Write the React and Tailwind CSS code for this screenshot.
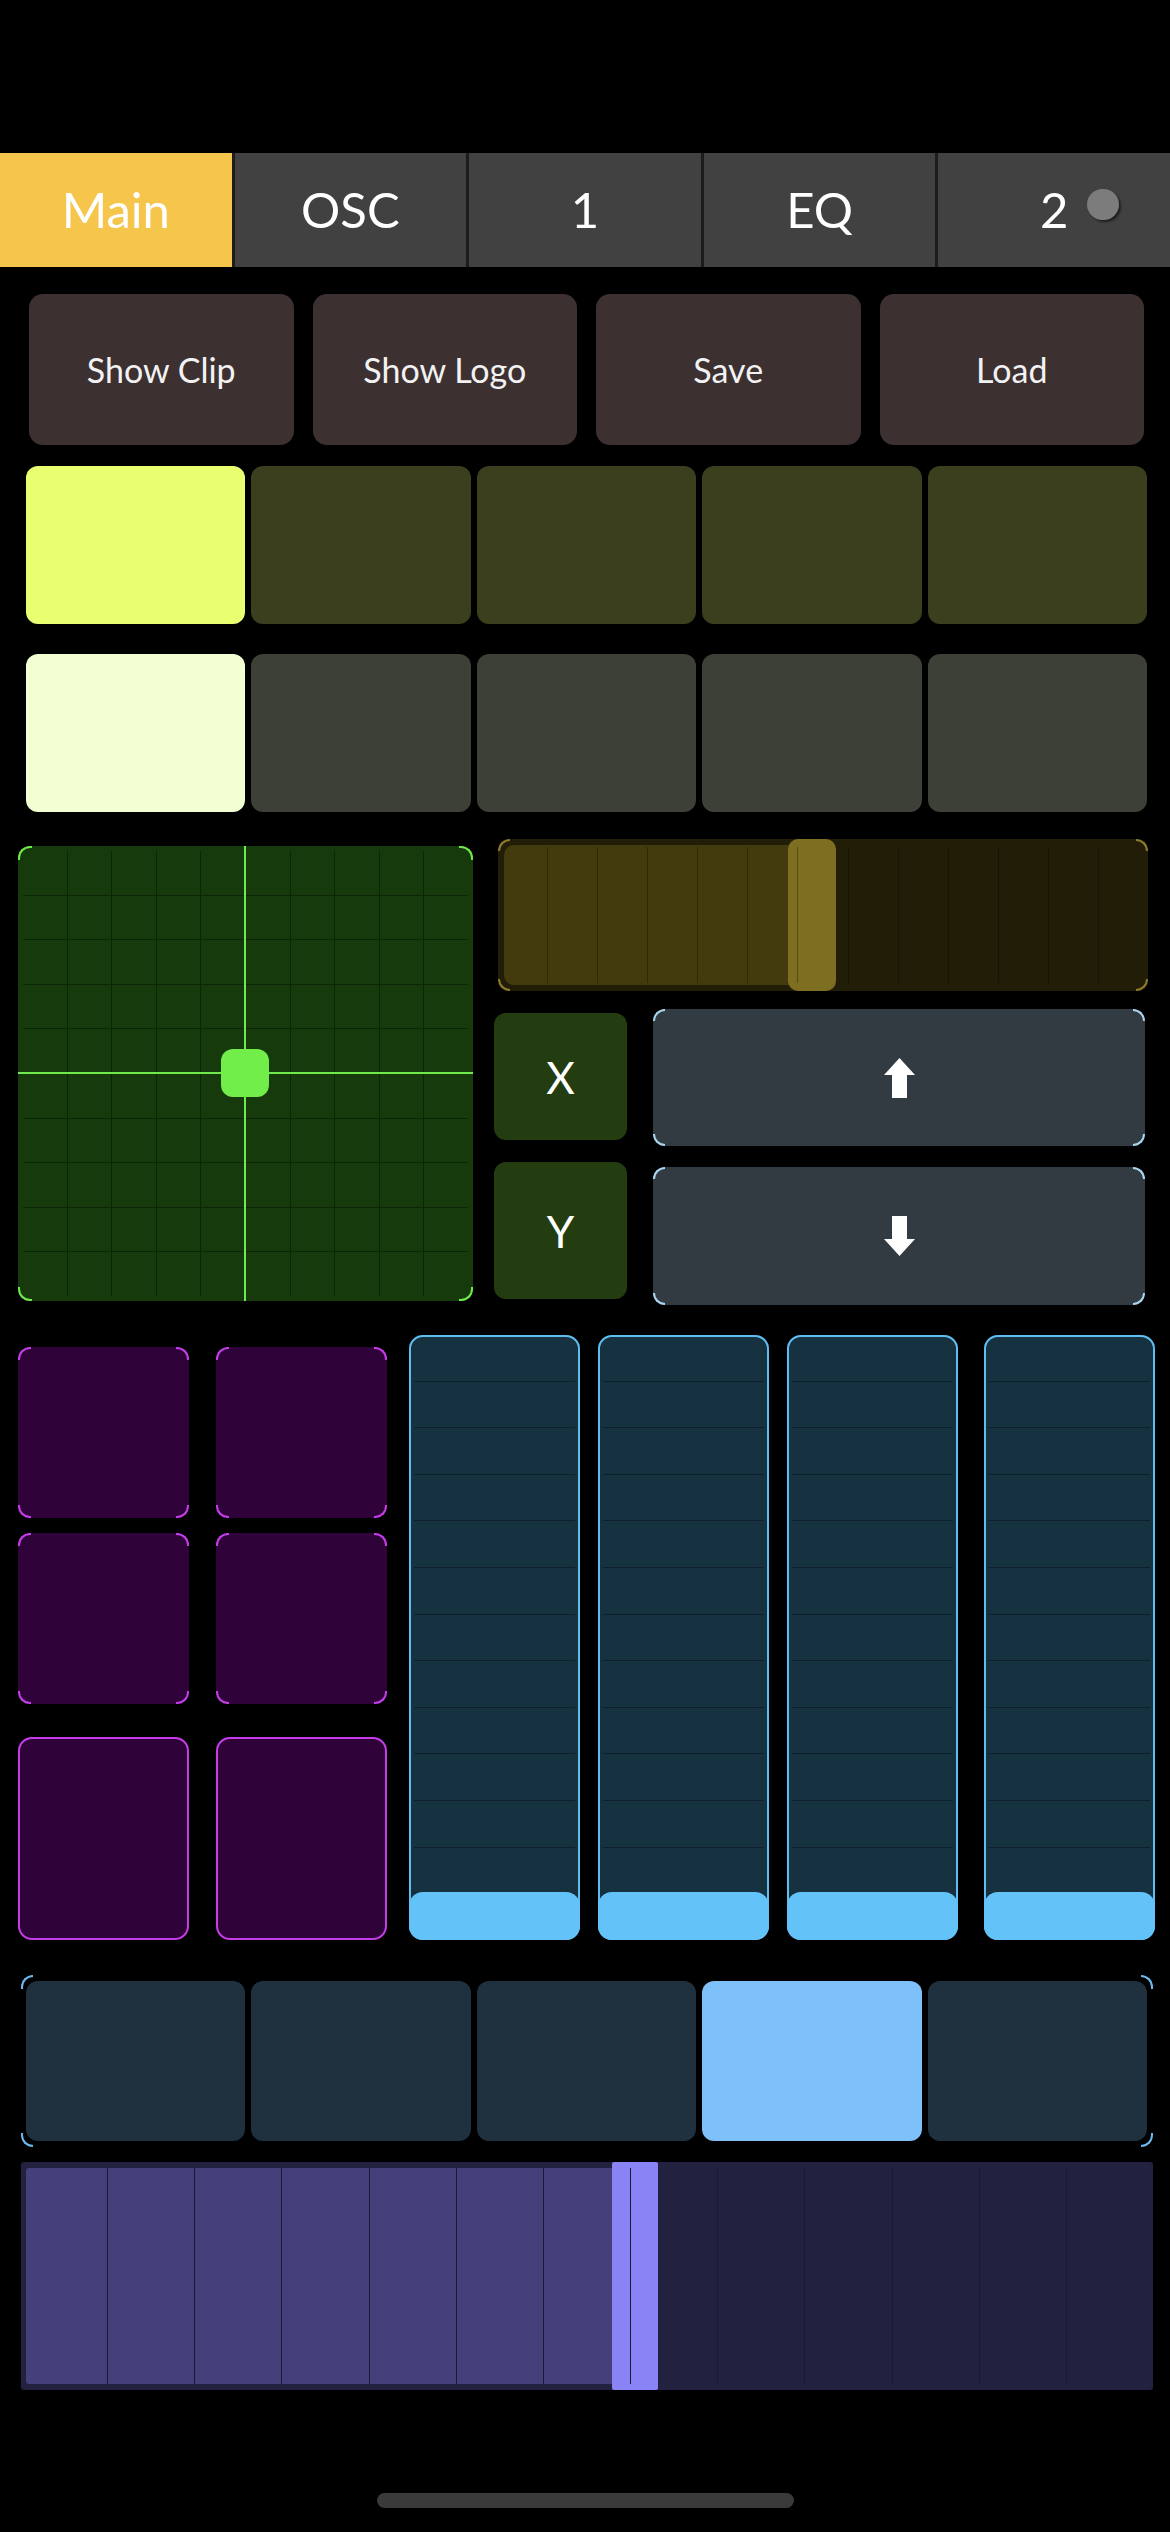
import React from 'react';

const FONT = { fontFamily: 'Lato, "Open Sans", sans-serif' };

const TABS = ['Main', 'OSC', '1', 'EQ', '2'];
const TOP_BUTTONS = ['Show Clip', 'Show Logo', 'Save', 'Load'];

// little arc brackets drawn on the corners of some controls
function Corners({ cls }) {
  return (
    <>
      <span className={`pointer-events-none absolute left-0 top-0 border-t-2 border-l-2 rounded-tl-[12px] ${cls}`} />
      <span className={`pointer-events-none absolute right-0 top-0 border-t-2 border-r-2 rounded-tr-[12px] ${cls}`} />
      <span className={`pointer-events-none absolute left-0 bottom-0 border-b-2 border-l-2 rounded-bl-[12px] ${cls}`} />
      <span className={`pointer-events-none absolute right-0 bottom-0 border-b-2 border-r-2 rounded-br-[12px] ${cls}`} />
    </>
  );
}

function VLines({ count, cls, inset }) {
  return (
    <div className={`pointer-events-none absolute flex ${inset}`}>
      {Array.from({ length: count }).map((_, i) => (
        <div key={i} className={`flex-1 ${i > 0 ? `border-l ${cls}` : ''}`} />
      ))}
    </div>
  );
}

function HLines({ count, cls, inset }) {
  return (
    <div className={`pointer-events-none absolute flex flex-col ${inset}`}>
      {Array.from({ length: count }).map((_, i) => (
        <div key={i} className={`flex-1 ${i > 0 ? `border-t ${cls}` : ''}`} />
      ))}
    </div>
  );
}

function Arrow({ down }) {
  return (
    <svg width="31" height="40" viewBox="0 0 31 40" className={down ? 'rotate-180' : ''}>
      <polygon points="15.5,0 31,17 23,17 23,40 8,40 8,17 0,17" fill="#ffffff" />
    </svg>
  );
}

function XYPad() {
  return (
    <div className="relative mt-[7px] h-[455px] w-[455px] rounded-[12px] bg-[#163a0c]">
      <VLines count={10} cls="border-[#0b2505]" inset="inset-[5px]" />
      <HLines count={10} cls="border-[#0b2505]" inset="inset-[5px]" />
      <div className="absolute inset-y-0 left-[226px] w-[2px] bg-[#6fe94b]" />
      <div className="absolute inset-x-0 top-[226px] h-[2px] bg-[#6fe94b]" />
      <div className="absolute left-[203px] top-[203px] h-[48px] w-[48px] rounded-[12px] bg-[#72ee4b]" />
      <Corners cls="w-[14px] h-[14px] border-[#6fe94b]" />
    </div>
  );
}

function HSlider() {
  return (
    <div className="relative ml-[4px] h-[152px] w-[650px] rounded-[10px] bg-[#211d06]">
      <div className="absolute left-[6px] top-[6px] bottom-[6px] w-[300px] rounded-[10px] bg-[#433b0e]" />
      <div className="absolute top-0 bottom-0 left-[290px] w-[48px] rounded-[10px] bg-[#7d6e22]" />
      <VLines count={13} cls="border-black/30" inset="inset-x-0 inset-y-[8px]" />
      <Corners cls="w-[12px] h-[12px] border-[#8d7a2c]" />
    </div>
  );
}

function VSlider({ extra }) {
  return (
    <div className={`relative h-[605px] w-[171px] rounded-[14px] bg-[#16313f] ${extra}`}>
      <HLines count={13} cls="border-[#0d202c]" inset="inset-x-[5px] inset-y-0" />
      <div className="absolute inset-0 rounded-[14px] border-2 border-[#5fbdf0]" />
      <div className="absolute bottom-0 left-0 right-0 h-[48px] rounded-[14px] bg-[#63c3f8]" />
    </div>
  );
}

function PurplePad({ tall, framed }) {
  return (
    <div
      className={`relative w-[171px] rounded-[14px] bg-[#2f0239] ${tall ? 'h-[203px]' : 'h-[171px]'} ${
        framed ? 'border-2 border-[#c43de8]' : ''
      }`}
    >
      {!framed && <Corners cls="w-[13px] h-[13px] border-[#c43de8]" />}
    </div>
  );
}

export default function App() {
  return (
    <div className="flex h-[2532px] w-[1170px] flex-col overflow-hidden bg-black pt-[153px] text-white" style={FONT}>
      {/* tab strip */}
      <div className="flex h-[114px] gap-[3px] bg-[#1c1c1c]">
        {TABS.map((t, i) => (
          <div
            key={t}
            className={`relative flex flex-1 items-center justify-center text-[49px] ${
              i === 0 ? 'bg-[#f6c54b]' : 'bg-[#414141]'
            }`}
          >
            {t}
            {t === '2' && (
              <span className="absolute right-[51px] top-[36px] h-[31px] w-[32px] rounded-full bg-[#7c7c7c] shadow-[2px_2px_2px_rgba(0,0,0,0.5)]" />
            )}
          </div>
        ))}
      </div>

      {/* action buttons */}
      <div className="mt-[27px] flex h-[151px] gap-[19px] pl-[29px] pr-[26px]">
        {TOP_BUTTONS.map((b) => (
          <div key={b} className="flex flex-1 items-center justify-center rounded-[14px] bg-[#3c3031] text-[34px] text-[#f2f2f2]">
            {b}
          </div>
        ))}
      </div>

      {/* toggle rows */}
      <div className="mt-[21px] flex h-[158px] gap-[6px] pl-[26px] pr-[23px]">
        {[0, 1, 2, 3, 4].map((i) => (
          <div key={i} className={`flex-1 rounded-[12px] ${i === 0 ? 'bg-[#eaff6f]' : 'bg-[#3b3f1e]'}`} />
        ))}
      </div>
      <div className="mt-[30px] flex h-[158px] gap-[6px] pl-[26px] pr-[23px]">
        {[0, 1, 2, 3, 4].map((i) => (
          <div key={i} className={`flex-1 rounded-[12px] ${i === 0 ? 'bg-[#f1ffd3]' : 'bg-[#3c4037]'}`} />
        ))}
      </div>

      {/* xy pad + slider + nudges */}
      <div className="mt-[27px] flex pl-[18px]">
        <XYPad />
        <div className="ml-[21px] flex w-[654px] flex-col">
          <HSlider />
          <div className="mt-[18px] flex">
            <div className="mt-[4px] flex h-[127px] w-[133px] items-center justify-center rounded-[12px] bg-[#243d10] text-[44px]">
              X
            </div>
            <div className="relative ml-[26px] flex h-[137px] w-[492px] items-center justify-center rounded-[12px] bg-[#323a42]">
              <Arrow />
              <Corners cls="w-[12px] h-[12px] border-[#a9d6ee]" />
            </div>
          </div>
          <div className="mt-[16px] flex">
            <div className="flex h-[137px] w-[133px] items-center justify-center rounded-[12px] bg-[#243d10] text-[44px]">
              Y
            </div>
            <div className="relative ml-[26px] mt-[5px] flex h-[138px] w-[492px] items-center justify-center rounded-[12px] bg-[#323a42]">
              <Arrow down />
              <Corners cls="w-[12px] h-[12px] border-[#a9d6ee]" />
            </div>
          </div>
        </div>
      </div>

      {/* pads + faders */}
      <div className="mt-[30px] flex pl-[18px]">
        <div className="mt-[12px] flex flex-col">
          <div className="flex gap-[27px]">
            <PurplePad />
            <PurplePad />
          </div>
          <div className="mt-[15px] flex gap-[27px]">
            <PurplePad />
            <PurplePad />
          </div>
          <div className="mt-[33px] flex gap-[27px]">
            <PurplePad tall framed />
            <PurplePad tall framed />
          </div>
        </div>
        <div className="ml-[22px] flex">
          <VSlider extra="" />
          <VSlider extra="ml-[18px]" />
          <VSlider extra="ml-[18px]" />
          <VSlider extra="ml-[26px]" />
        </div>
      </div>

      {/* radio row */}
      <div className="relative ml-[21px] mt-[35px] flex h-[172px] w-[1132px] gap-[6px] py-[6px] pl-[5px] pr-[6px]">
        {[0, 1, 2, 3, 4].map((i) => (
          <div key={i} className={`flex-1 rounded-[12px] ${i === 3 ? 'bg-[#7ec0fa]' : 'bg-[#1f303e]'}`} />
        ))}
        <Corners cls="w-[12px] h-[14px] border-[#6eb8ee]" />
      </div>

      {/* bottom fader */}
      <div className="relative ml-[21px] mt-[15px] h-[228px] w-[1132px] rounded-[3px] bg-[#222240]">
        <div className="absolute left-[5px] top-[6px] bottom-[6px] w-[600px] rounded-[3px] bg-[#453f7b]" />
        <div className="absolute top-0 bottom-0 left-[591px] w-[46px] rounded-[2px] bg-[#8983f5]" />
        <VLines count={13} cls="border-[#1a1a33]" inset="inset-x-0 inset-y-[6px]" />
      </div>

      {/* home indicator */}
      <div className="mx-auto mt-[103px] h-[15px] w-[417px] rounded-full bg-[#3a3a3a]" />
    </div>
  );
}
